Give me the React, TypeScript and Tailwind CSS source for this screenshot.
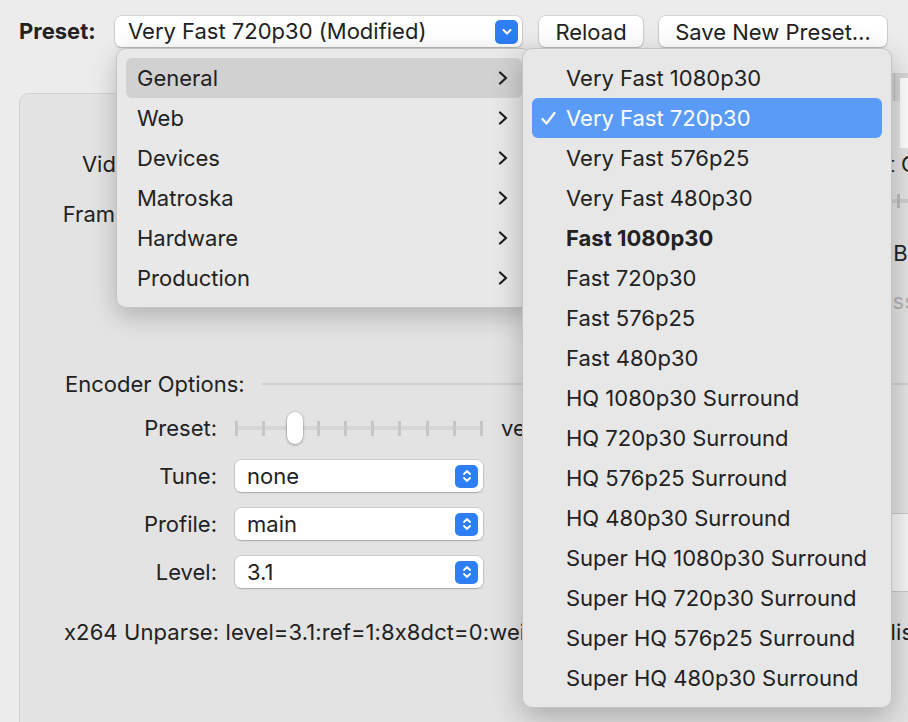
import React from 'react'

const generalPresets = [
  'Very Fast 1080p30',
  'Very Fast 720p30',
  'Very Fast 576p25',
  'Very Fast 480p30',
  'Fast 1080p30',
  'Fast 720p30',
  'Fast 576p25',
  'Fast 480p30',
  'HQ 1080p30 Surround',
  'HQ 720p30 Surround',
  'HQ 576p25 Surround',
  'HQ 480p30 Surround',
  'Super HQ 1080p30 Surround',
  'Super HQ 720p30 Surround',
  'Super HQ 576p25 Surround',
  'Super HQ 480p30 Surround',
]

const categories = ['General', 'Web', 'Devices', 'Matroska', 'Hardware', 'Production']

function Stepper() {
  return (
    <span className="flex items-center justify-center w-[23px] h-[23px] rounded-[5px] bg-[#2f7ef5]">
      <svg width="10" height="14" viewBox="0 0 10 14" fill="none" stroke="white" strokeWidth="1.8" strokeLinecap="round" strokeLinejoin="round">
        <polyline points="2,5 5,2 8,5" />
        <polyline points="2,9 5,12 8,9" />
      </svg>
    </span>
  )
}

function PopUp({ value }: { value: string }) {
  return (
    <div className="flex items-center justify-between w-[248px] h-[32px] pl-[12px] pr-[5px] bg-white rounded-[6px] shadow-[0_0_0_0.5px_rgba(0,0,0,0.18),0_1px_2px_rgba(0,0,0,0.2)]">
      <span>{value}</span>
      <Stepper />
    </div>
  )
}

function Chevron() {
  return (
    <svg width="10" height="14" viewBox="0 0 10 14" fill="none" stroke="#1e1e1e" strokeWidth="2.2" strokeLinecap="round" strokeLinejoin="round">
      <polyline points="2,1.5 8,7 2,12.5" />
    </svg>
  )
}

export default function App() {
  return (
    <div className="relative w-[908px] h-[722px] overflow-hidden bg-[#ececec] text-[#222] text-[22px] font-['Inter','Noto_Sans',sans-serif] [font-feature-settings:'calt'_0]">
      {/* preset toolbar */}
      <div className="flex items-center h-[31px] mt-[16px] pl-[19px] whitespace-nowrap">
        <span className="w-[96px] font-bold">Preset:</span>
        <div className="flex items-center justify-between w-[407px] h-[31px] pl-[13px] pr-[4px] bg-white rounded-[6px] shadow-[0_0_0_0.5px_rgba(0,0,0,0.18),0_1px_2px_rgba(0,0,0,0.2)]">
          <span>Very Fast 720p30 (Modified)</span>
          <span className="flex items-center justify-center w-[23px] h-[24px] rounded-[5px] bg-[#2f7ef5]">
            <svg width="10" height="6" viewBox="0 0 10 6" fill="none" stroke="white" strokeWidth="2" strokeLinecap="round" strokeLinejoin="round">
              <polyline points="1.5,1 5,4.5 8.5,1" />
            </svg>
          </span>
        </div>
        <button className="ml-[17px] w-[104px] h-[31px] bg-white rounded-[6px] shadow-[0_0_0_0.5px_rgba(0,0,0,0.18),0_1px_2px_rgba(0,0,0,0.2)]">
          Reload
        </button>
        <button className="ml-[16px] w-[228px] h-[31px] bg-white rounded-[6px] shadow-[0_0_0_0.5px_rgba(0,0,0,0.18),0_1px_2px_rgba(0,0,0,0.2)]">
          Save New Preset…
        </button>
      </div>

      {/* tab panel */}
      <div className="relative ml-[19px] mt-[46px] w-[1000px] h-[700px] rounded-[10px] border border-[#d2d2d2] bg-[#e3e3e3] whitespace-nowrap">
        <div className="absolute left-[700px] top-[-21px] flex h-[28px] w-[300px] rounded-[6px] bg-[#d6d6d6]">
          <div className="w-[175px] border-r border-[#bdbdbd]" />
          <div className="flex-1 ml-[5px] mt-[5px] h-[70px] bg-white" />
        </div>

        <div className="pt-[54px]">
          <div className="flex h-[224px]">
            <div className="w-[540px] shrink-0">
              <div className="flex items-center h-[32px]">
                <span className="w-[221px] text-right">Video Encoder:</span>
              </div>
              <div className="flex items-center h-[32px] mt-[18px]">
                <span className="w-[218px] text-right">Framerate (FPS):</span>
              </div>
            </div>
            <div className="flex-1">
              <div className="flex items-center h-[32px] pl-[241px]">Constant Quality</div>
              <div className="flex items-center h-[32px] mt-[5px] pl-[240px]">
                <div className="relative flex items-center w-[200px] h-[14px]">
                  <div className="absolute left-0 right-0 top-[5px] h-[4px] bg-[#cfcfcf]" />
                  <div className="relative flex gap-[23px] pl-[19px]">
                    {[0, 1, 2, 3, 4, 5].map((i) => (
                      <span key={i} className="w-[3px] h-[14px] bg-[#bdbdbd]" />
                    ))}
                  </div>
                </div>
              </div>
              <div className="flex items-center h-[32px] mt-[20px] pl-[288px]">Avg Bitrate (kbps):</div>
              <div className="flex items-center h-[32px] mt-[16px] pl-[283px] text-[#b3b3b3]">2-pass encoding</div>
            </div>
          </div>

          <div className="flex items-center h-[24px] pl-[45px]">
            <span>Encoder Options:</span>
            <div className="flex-1 ml-[17px] h-[2px] bg-[#d0d0d0]" />
          </div>

          <div className="flex items-start">
            <div className="shrink-0">
              <div className="flex items-center h-[32px] mt-[16px]">
                <span className="w-[197px] text-right">Preset:</span>
                <div className="relative ml-[18px] w-[248px] h-[32px] flex items-center">
                  <div className="absolute left-[2px] right-[2px] top-[14px] h-[4px] bg-[#d6d6d6]" />
                  <div className="relative flex w-full justify-between">
                    {[0, 1, 2, 3, 4, 5, 6, 7, 8, 9].map((i) => (
                      <span key={i} className="w-[3px] h-[15px] bg-[#c6c6c6]" />
                    ))}
                  </div>
                  <span className="absolute left-[52px] top-0 w-[16px] h-[32px] rounded-full bg-white shadow-[0_0_0_0.5px_rgba(0,0,0,0.15),0_1px_3px_rgba(0,0,0,0.3)]" />
                </div>
                <span className="ml-[18px]">veryfast</span>
              </div>
              <div className="flex items-center h-[32px] mt-[16px]">
                <span className="w-[197px] text-right">Tune:</span>
                <div className="ml-[18px]"><PopUp value="none" /></div>
              </div>
              <div className="flex items-center h-[32px] mt-[16px]">
                <span className="w-[197px] text-right">Profile:</span>
                <div className="ml-[18px]"><PopUp value="main" /></div>
              </div>
              <div className="flex items-center h-[32px] mt-[16px]">
                <span className="w-[197px] text-right">Level:</span>
                <div className="ml-[18px]"><PopUp value="3.1" /></div>
              </div>
            </div>
            <div className="ml-[60px] mt-[117px] w-[400px] h-[79px] bg-[#f6f6f6] border border-[#c9c9c9]" />
          </div>

          <div className="flex items-center h-[24px] mt-[28px] pl-[44px] tracking-[0.1px]">
            x264 Unparse: level=3.1:ref=1:8x8dct=0:weightp=1:subme=2:mixed-refs=0:trellis=0:vbv-bufsize=14000:vbv-maxrate=10000:rc-lookahead=10
          </div>
        </div>
      </div>

      {/* category menu */}
      <div className="absolute left-[116px] top-[48px] w-[416px] py-[9px] rounded-[10px] border border-[#c4c4c4] bg-[#e8e8e8] shadow-[0_8px_26px_rgba(0,0,0,0.22)]">
        {categories.map((c, i) => (
          <div
            key={c}
            className={`flex items-center justify-between h-[40px] mx-[9px] pl-[11px] pr-[14px] rounded-[6px] ${i === 0 ? 'bg-[#d1d1d1]' : ''}`}
          >
            <span>{c}</span>
            <Chevron />
          </div>
        ))}
      </div>

      {/* preset submenu */}
      <div className="absolute left-[522px] top-[48px] w-[370px] py-[9px] rounded-[10px] border border-[#c4c4c4] bg-[#e7e7e7] shadow-[0_10px_30px_rgba(0,0,0,0.25)] whitespace-nowrap">
        {generalPresets.map((p, i) => {
          const selected = i === 1
          return (
            <div
              key={p}
              className={`flex items-center h-[40px] mx-[9px] pl-[9px] rounded-[6px] ${selected ? 'bg-[#5a9bf8] text-white' : ''}`}
            >
              <span className="w-[25px]">
                {selected && (
                  <svg width="15" height="15" viewBox="0 0 15 15" fill="none" stroke="white" strokeWidth="2.2" strokeLinecap="round" strokeLinejoin="round">
                    <polyline points="1.5,8 5.5,12.5 13.5,2" />
                  </svg>
                )}
              </span>
              <span className={i === 4 ? 'font-bold' : ''}>{p}</span>
            </div>
          )
        })}
      </div>
    </div>
  )
}
